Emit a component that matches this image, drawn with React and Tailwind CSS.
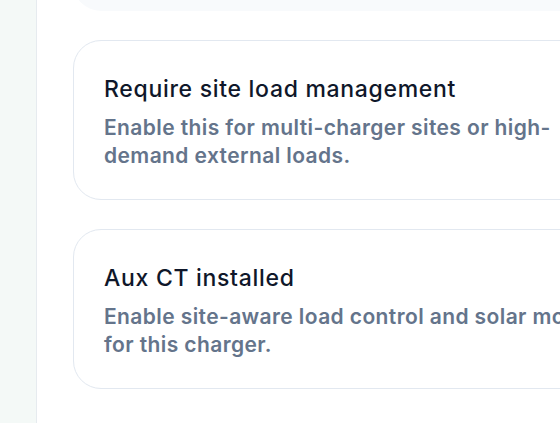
const SETTINGS = [
  {
    title: 'Require site load management',
    description: 'Enable this for multi-charger sites or high-demand external loads.',
  },
  {
    title: 'Aux CT installed',
    description: 'Enable site-aware load control and solar mode for this charger.',
  },
]

function SettingCard({ title, description }) {
  return (
    <div className="flex h-[160px] w-[620px] shrink-0 items-center rounded-[28px] border border-[#e2e8f0] bg-white px-[30px]">
      <div className="mt-[4px] flex w-[515px] shrink-0 flex-col gap-[11px]">
        <h3 className="text-[23px] font-medium leading-[28px] tracking-[0.7px] text-[#0f172a]">{title}</h3>
        <p className="text-[21px] font-semibold leading-[28px] tracking-[0.4px] text-[#64748b]">{description}</p>
      </div>
    </div>
  )
}

export default function App() {
  return (
    <div className="flex h-[423px] w-[560px] overflow-hidden bg-white font-['Inter',sans-serif] antialiased">
      <aside className="h-full w-[37px] shrink-0 border-r border-[#e6ebef] bg-[#f4f9f7]" />
      <main className="flex flex-col gap-[29px] pl-[36px]">
        <div className="-mt-[49px] h-[60px] w-[620px] shrink-0 rounded-[28px] bg-[#f8fafc]" />
        {SETTINGS.map(s => (
          <SettingCard key={s.title} {...s} />
        ))}
      </main>
    </div>
  )
}
